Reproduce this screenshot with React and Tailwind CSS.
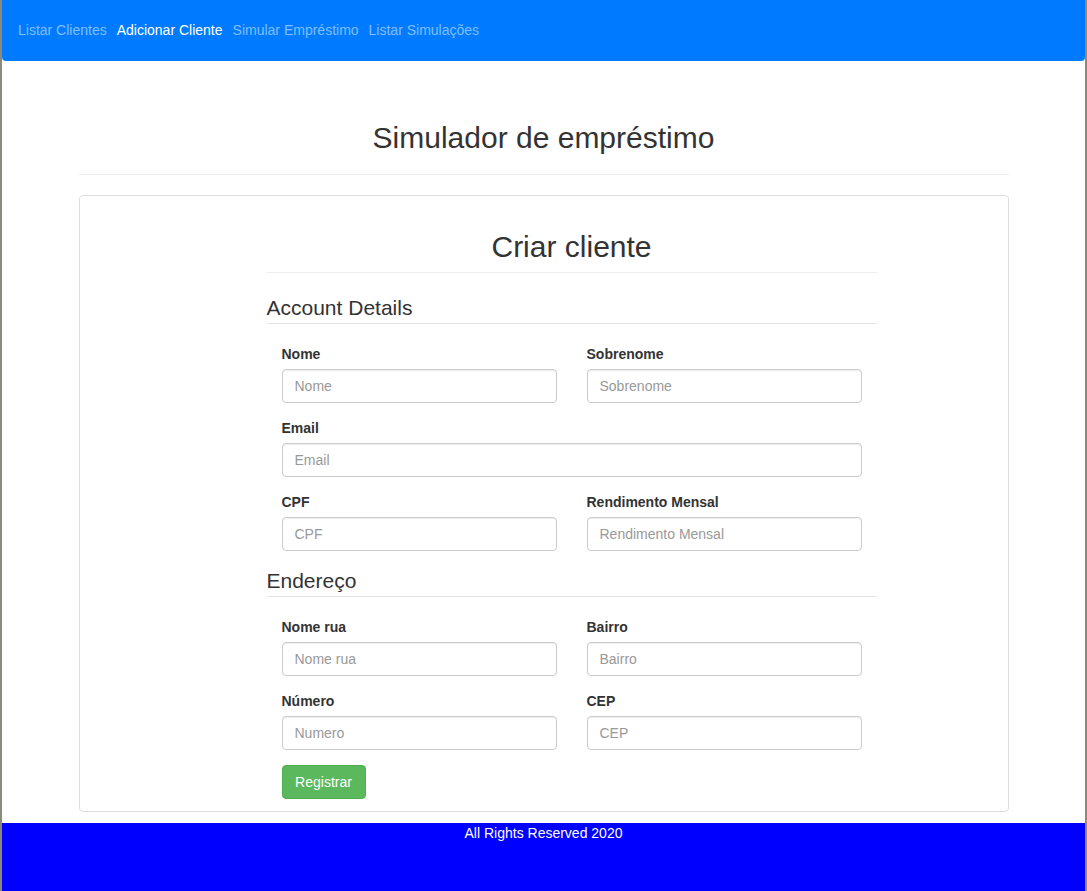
import React from "react";

const Field = ({ label, placeholder, full }) => (
  <div className={`mb-[15px] ${full ? "col-span-2" : ""}`}>
    <label className="block text-[14px] leading-[20px] font-bold text-[#333] mb-[5px]">{label}</label>
    <input
      placeholder={placeholder}
      className="block w-full h-[34px] px-[12px] py-[6px] text-[14px] text-[#555] border border-[#ccc] rounded-[4px] shadow-[inset_0_1px_1px_rgba(0,0,0,0.075)] placeholder:text-[#999] outline-none bg-white"
    />
  </div>
);

const Legend = ({ children }) => (
  <div className="h-[31px] text-[21px] leading-[30px] text-[#333] border-b border-[#e5e5e5] mb-[20px]">{children}</div>
);

export default function App() {
  return (
    <div
      className="min-h-screen flex flex-col border-x-2 border-[#8c8a78] bg-white"
      style={{ fontFamily: '"Liberation Sans", Arial, Helvetica, sans-serif' }}
    >
      <nav className="h-[61px] bg-[#007bff] rounded-b-[4px] flex items-start pt-[20px] px-[16px] gap-[10px] text-[14px] leading-[20px]">
        <a className="text-white/50">Listar Clientes</a>
        <a className="text-white">Adicionar Cliente</a>
        <a className="text-white/50">Simular Empréstimo</a>
        <a className="text-white/50">Listar Simulações</a>
      </nav>

      <div className="w-[930px] mx-auto">
        <div className="pt-[60px] pb-[20px] border-b border-[#eee]">
          <h2 className="text-[30px] leading-[33px] text-[#333] text-center">Simulador de empréstimo</h2>
        </div>

        <div className="mt-[20px] border border-[#ddd] rounded-[4px] pl-[187px] pt-[34px] pb-[12px]">
          <div className="w-[610px]">
            <div className="pb-[9px] border-b border-[#eee] mb-[20px]">
              <h2 className="text-[30px] leading-[33px] text-[#333] text-center">Criar cliente</h2>
            </div>

            <Legend>Account Details</Legend>
            <div className="grid grid-cols-2 gap-x-[30px] px-[15px]">
              <Field label="Nome" placeholder="Nome" />
              <Field label="Sobrenome" placeholder="Sobrenome" />
              <Field label="Email" placeholder="Email" full />
              <Field label="CPF" placeholder="CPF" />
              <Field label="Rendimento Mensal" placeholder="Rendimento Mensal" />
            </div>

            <Legend>Endereço</Legend>
            <div className="grid grid-cols-2 gap-x-[30px] px-[15px]">
              <Field label="Nome rua" placeholder="Nome rua" />
              <Field label="Bairro" placeholder="Bairro" />
              <Field label="Número" placeholder="Numero" />
              <Field label="CEP" placeholder="CEP" />
            </div>

            <div className="px-[15px]">
              <button className="h-[34px] w-[84px] bg-[#5cb85c] border border-[#4cae4c] rounded-[4px] text-white text-[14px] leading-[20px]">
                Registrar
              </button>
            </div>
          </div>
        </div>
      </div>

      <footer className="mt-[11px] flex-1 min-h-[68px] bg-[#0000ff] text-white text-[14px] leading-[20px] text-center">
        All Rights Reserved 2020
      </footer>
    </div>
  );
}
